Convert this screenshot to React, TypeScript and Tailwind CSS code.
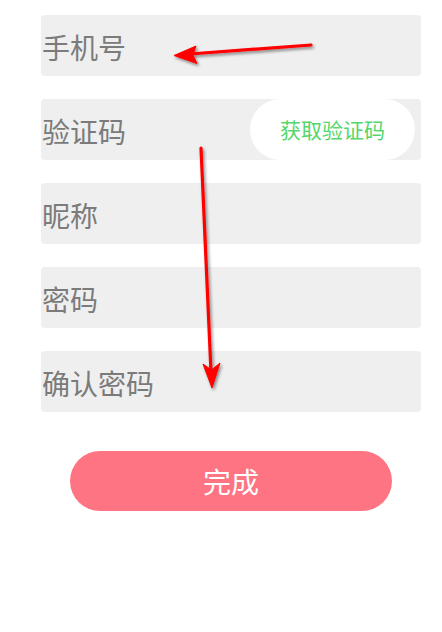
import React from 'react';

const fields = ['手机号', '验证码', '昵称', '密码', '确认密码'];

const Arrows = () => (
  <svg className="pointer-events-none absolute left-0 top-0" width="442" height="632" viewBox="0 0 442 632">
    <defs>
      <filter id="shadow" x="-20%" y="-20%" width="140%" height="140%">
        <feDropShadow dx="1.5" dy="2" stdDeviation="1.5" floodColor="#000" floodOpacity="0.45" />
      </filter>
    </defs>
    <g filter="url(#shadow)" fill="#f00" stroke="#f00">
      {/* arrow pointing at phone field */}
      <line x1="311" y1="45" x2="190" y2="54" strokeWidth="3.2" strokeLinecap="round" />
      <polygon points="174,55.5 196,46 193,55 197,63.5" strokeWidth="1" strokeLinejoin="round" />
      {/* long arrow down */}
      <line x1="201" y1="148" x2="211" y2="372" strokeWidth="3.2" strokeLinecap="round" />
      <polygon points="212,388 203,364 211.5,370 220,363" strokeWidth="1" strokeLinejoin="round" />
    </g>
  </svg>
);

export default function App() {
  return (
    <div
      className="relative h-[632px] w-[442px] overflow-hidden bg-white"
      style={{ fontFamily: '"Noto Sans CJK SC", "Noto Sans", sans-serif' }}
    >
      <div className="ml-[41px] flex w-[380px] flex-col gap-[23px] pt-[15px]">
        {fields.map((f) => (
          <div key={f} className="flex h-[61px] items-center justify-between rounded-[4px] bg-[#efefef] pr-[6px]">
            <span className="pl-px pt-[2px] text-[28px] leading-none text-[#7b7b7b]">{f}</span>
            {f === '验证码' && (
              <div className="flex h-[61px] w-[165px] items-center justify-center rounded-full bg-white text-[21px] text-[#55d66b]">
                获取验证码
              </div>
            )}
          </div>
        ))}
        <div className="mx-auto mt-[16px] flex h-[60px] w-[322px] items-center justify-center rounded-full bg-[#ff7483] text-[28px] text-white">
          完成
        </div>
      </div>
      <Arrows />
    </div>
  );
}
